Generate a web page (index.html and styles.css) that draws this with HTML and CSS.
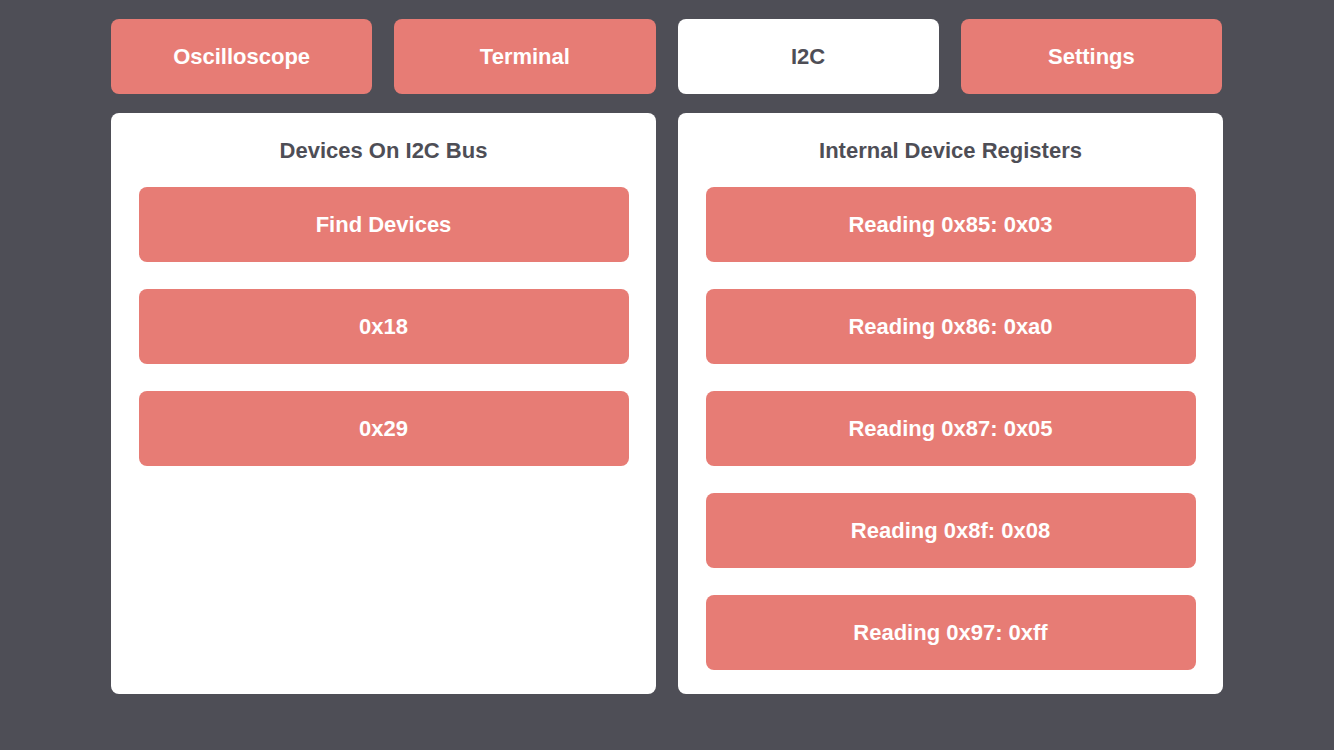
FILE: index.html
```html
<!DOCTYPE html>
<html>
<head>
<meta charset="utf-8">
<link rel="stylesheet" href="styles.css">
</head>
<body>
<div class="app">
  <nav class="tabs">
    <div class="tab">Oscilloscope</div>
    <div class="tab">Terminal</div>
    <div class="tab active">I2C</div>
    <div class="tab">Settings</div>
  </nav>
  <main class="panels">
    <section class="panel">
      <h2 class="panel-title">Devices On I2C Bus</h2>
      <div class="btn-list">
        <div class="btn">Find Devices</div>
        <div class="btn">0x18</div>
        <div class="btn">0x29</div>
      </div>
    </section>
    <section class="panel">
      <h2 class="panel-title">Internal Device Registers</h2>
      <div class="btn-list">
        <div class="btn">Reading 0x85: 0x03</div>
        <div class="btn">Reading 0x86: 0xa0</div>
        <div class="btn">Reading 0x87: 0x05</div>
        <div class="btn">Reading 0x8f: 0x08</div>
        <div class="btn">Reading 0x97: 0xff</div>
      </div>
    </section>
  </main>
</div>
</body>
</html>
```
FILE: styles.css
```css
html, body {
  margin: 0;
  padding: 0;
  background: #4e4e56;
  font-family: "Liberation Sans", Arial, Helvetica, sans-serif;
}
.app {
  width: 1112px;
  margin: 0 auto;
  padding-top: 19px;
}
.tabs {
  display: grid;
  grid-template-columns: repeat(4, 1fr);
  gap: 22px;
  margin: 0 1px 19px 0;
}
.tab {
  height: 75px;
  border-radius: 8px;
  background: #e77c75;
  color: #fff;
  font-weight: bold;
  font-size: 22px;
  display: flex;
  align-items: center;
  justify-content: center;
}
.tab.active {
  background: #fff;
  color: #4e4e56;
}
.panels {
  display: grid;
  grid-template-columns: 1fr 1fr;
  gap: 22px;
}
.panel {
  background: #fff;
  border-radius: 8px;
  height: 581px;
  box-sizing: border-box;
  padding: 26px 27.5px 25px 27.5px;
}
.panel-title {
  margin: 0 0 24px;
  text-align: center;
  font-size: 22px;
  line-height: 24px;
  font-weight: bold;
  color: #4e4e56;
}
.btn-list {
  display: flex;
  flex-direction: column;
  gap: 27px;
}
.btn {
  height: 75px;
  border-radius: 8px;
  background: #e77c75;
  color: #fff;
  font-weight: bold;
  font-size: 22px;
  display: flex;
  align-items: center;
  justify-content: center;
}
```
